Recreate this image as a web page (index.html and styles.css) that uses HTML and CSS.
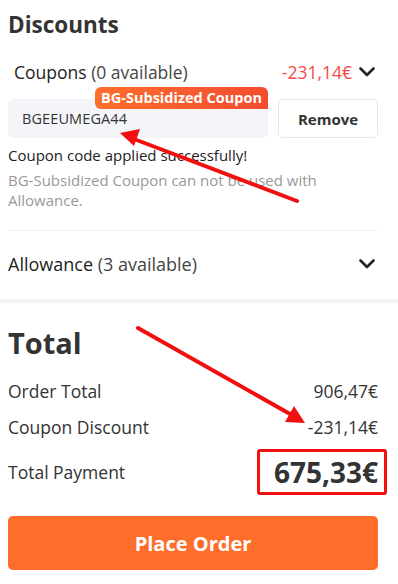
FILE: index.html
```html
<!DOCTYPE html>
<html>
<head>
<meta charset="utf-8">
<link rel="stylesheet" href="styles.css">
</head>
<body>
<div class="page">
  <section class="discounts">
    <h2 class="title">Discounts</h2>
    <div class="row coupons-row">
      <div class="label">Coupons <span class="muted">(0 available)</span></div>
      <div class="right">
        <span class="neg">-231,14€</span>
        <svg class="chev" width="16" height="10" viewBox="0 0 16 10"><path d="M1.5 1.5 L8 8 L14.5 1.5" fill="none" stroke="#222" stroke-width="2.6" stroke-linecap="round" stroke-linejoin="round"/></svg>
      </div>
    </div>
    <div class="code-row">
      <div class="code-box">
        <span class="badge">BG-Subsidized Coupon</span>
        <span class="code">BGEEUMEGA44</span>
      </div>
      <button class="remove">Remove</button>
    </div>
    <p class="ok">Coupon code applied successfully!</p>
    <p class="note">BG-Subsidized Coupon can not be used with Allowance.</p>
    <div class="divider"></div>
    <div class="row allowance-row">
      <div class="label al">Allowance <span class="muted">(3 available)</span></div>
      <svg class="chev" width="16" height="10" viewBox="0 0 16 10"><path d="M1.5 1.5 L8 8 L14.5 1.5" fill="none" stroke="#222" stroke-width="2.6" stroke-linecap="round" stroke-linejoin="round"/></svg>
    </div>
  </section>
  <div class="sep"></div>
  <section class="total">
    <h2 class="title big">Total</h2>
    <div class="line first"><span>Order Total</span><span>906,47€</span></div>
    <div class="line"><span>Coupon Discount</span><span>-231,14€</span></div>
    <div class="line pay"><span>Total Payment</span><span class="amount">675,33€</span></div>
    <button class="place">Place Order</button>
  </section>
  <svg class="arrows" width="398" height="584" viewBox="0 0 398 584">
    <line x1="297" y1="201" x2="134" y2="139" stroke="#f01010" stroke-width="4" stroke-linecap="round"/>
    <polygon points="120,133 140,129 134,146" fill="#f01010"/>
    <line x1="138" y1="328" x2="290" y2="414" stroke="#f01010" stroke-width="4" stroke-linecap="round"/>
    <polygon points="305,423 285,422 294,406" fill="#f01010"/>
  </svg>
</div>
</body>
</html>
```
FILE: styles.css
```css
* { box-sizing: border-box; }
html, body { margin: 0; padding: 0; background: #fff; }
body { font-family: "Open Sans", "Noto Sans", sans-serif; color: #333; }
.page { position: relative; width: 398px; height: 584px; overflow: hidden; }
.discounts { padding: 0 20px 0 8px; }
.title { margin: 0; font-weight: 700; font-size: 22.5px; line-height: 32px; padding-top: 9px; color: #333; }
.row { display: flex; align-items: center; justify-content: space-between; }
.coupons-row { margin-top: 16px; height: 30px; padding-left: 6px; }
.label { font-size: 17.5px; color: #222; }
.label.al { font-size: 18px; }
.muted { color: #444; }
.right { display: flex; align-items: center; gap: 7px; }
.neg { color: #f44a4a; font-size: 17.5px; }
.chev { display: block; margin-right: 3px; }
.code-row { display: flex; gap: 10px; margin-top: 12px; }
.code-box { position: relative; flex: 0 0 260px; height: 39px; background: #f4f5f9; border-radius: 5px; display: flex; align-items: center; padding-left: 14px; }
.code { font-size: 14.5px; color: #333; letter-spacing: 0.1px; }
.badge { position: absolute; left: 87px; right: 0; top: -12px; height: 22px; background: linear-gradient(90deg, #ff6f2b, #f34b2f); color: #fff; font-weight: 700; font-size: 14.5px; line-height: 22px; text-align: center; border-radius: 6px 6px 0 6px; }
.remove { flex: 1; height: 39px; background: #fff; border: 1px solid #e8e8ec; border-radius: 5px; font-family: inherit; font-weight: 700; font-size: 15px; color: #333; padding: 0; }
.ok { margin: 7px 0 0; font-size: 15px; line-height: 20px; color: #222; }
.note { margin: 6px 0 0; font-size: 15px; line-height: 19.5px; color: #999; max-width: 330px; }
.divider { height: 1px; background: #eeeef0; margin-top: 20px; }
.allowance-row { height: 32px; margin-top: 17px; }
.sep { height: 4px; background: #f4f4f8; margin-top: 19px; }
.total { padding: 0 20px 0 8px; }
.big { font-size: 29px; line-height: 38px; padding-top: 21px; }
.line { display: flex; justify-content: space-between; align-items: center; font-size: 17.5px; color: #333; height: 36px; }
.line.first { margin-top: 11px; }
.pay { height: 52px; margin-top: 1px; }
.amount { font-weight: 700; font-size: 28px; color: #333; border: 3px solid #f01010; border-radius: 3px; padding: 0 6px 0 14px; margin-right: -9px; line-height: 40px; }
.place { display: block; width: 100%; height: 54px; margin-top: 18px; background: #ff6d2b; border: none; border-radius: 5px; color: #fff; font-family: inherit; font-weight: 700; font-size: 20px; }
.arrows { position: absolute; left: 0; top: 0; pointer-events: none; }
```
